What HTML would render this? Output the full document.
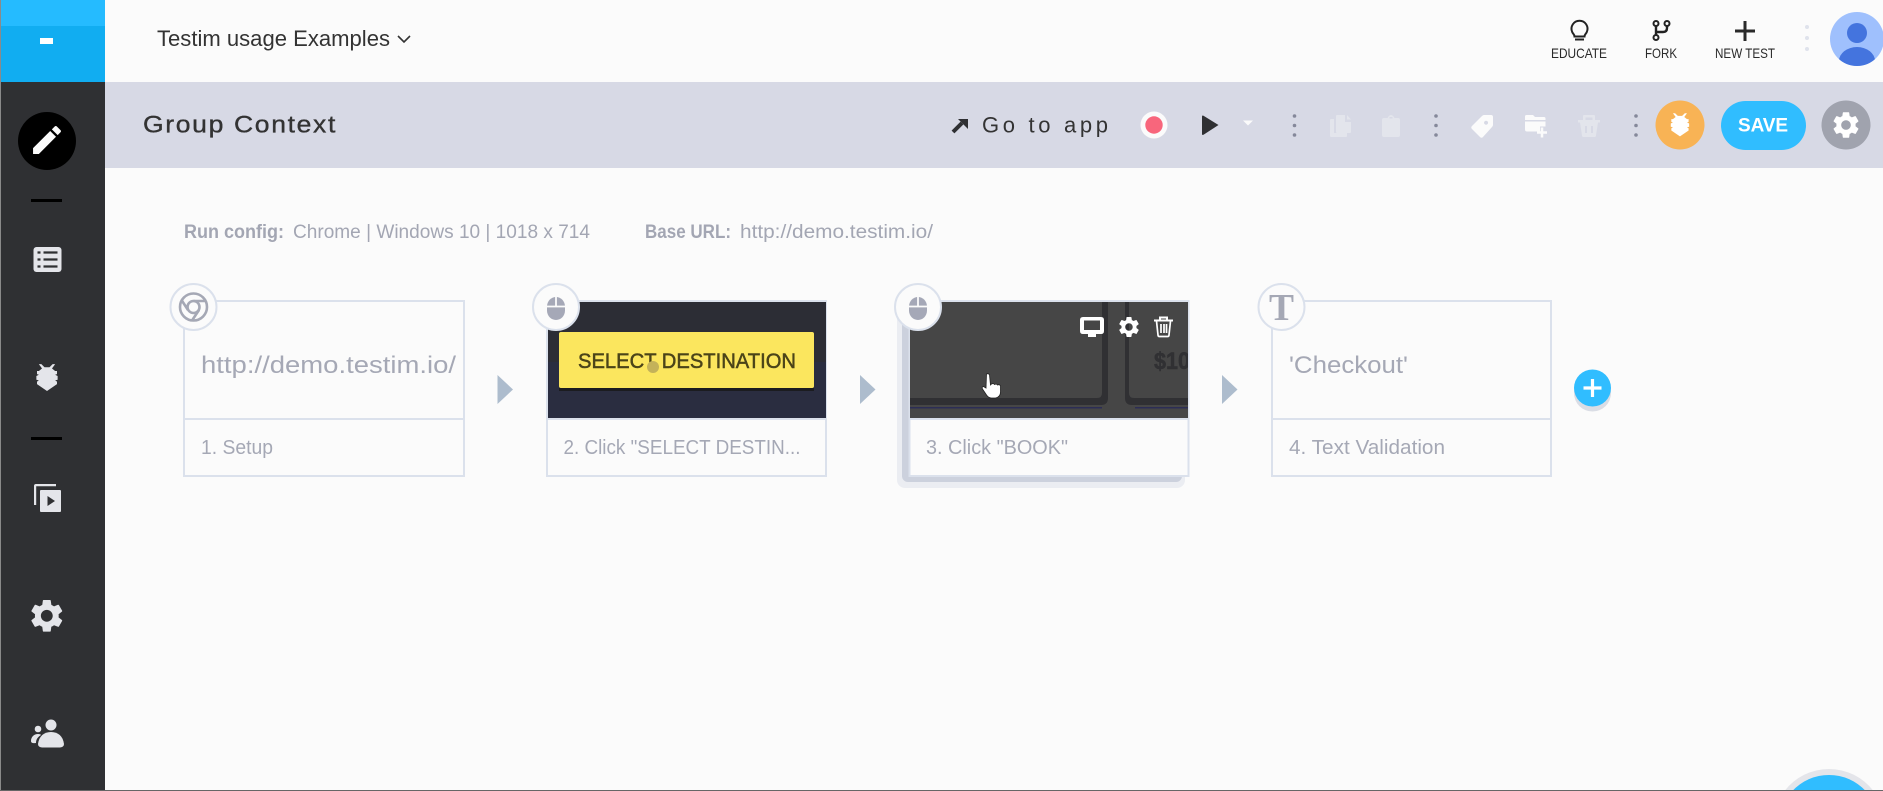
<!DOCTYPE html>
<html><head><meta charset="utf-8"><title>Group Context</title>
<style>
html,body{margin:0;padding:0;width:1883px;height:791px;overflow:hidden;background:#fbfbfb}
svg{display:block;overflow:hidden}
text{font-family:"Liberation Sans",sans-serif}
</style></head>
<body>
<svg width="1883" height="791" viewBox="0 0 1883 791" xmlns="http://www.w3.org/2000/svg">
<defs>
<path id="gear" d="M19.14 12.94c.04-.3.06-.61.06-.94 0-.32-.02-.64-.07-.94l2.03-1.58c.18-.14.23-.41.12-.61l-1.92-3.32c-.12-.22-.37-.29-.59-.22l-2.39.96c-.5-.38-1.03-.7-1.62-.94l-.36-2.54c-.04-.24-.24-.41-.48-.41h-3.84c-.24 0-.43.17-.47.41l-.36 2.54c-.59.24-1.13.57-1.62.94l-2.39-.96c-.22-.08-.47 0-.59.22L2.74 8.87c-.12.21-.08.47.12.61l2.03 1.58c-.05.3-.09.63-.09.94s.02.64.07.94l-2.03 1.58c-.18.14-.23.41-.12.61l1.92 3.32c.12.22.37.29.59.22l2.39-.96c.5.38 1.03.7 1.62.94l.36 2.54c.05.24.24.41.48.41h3.84c.24 0 .44-.17.47-.41l.36-2.54c.59-.24 1.13-.56 1.62-.94l2.39.96c.22.08.47 0 .59-.22l1.92-3.32c.12-.22.07-.47-.12-.61l-2.01-1.58zM12 15.6c-1.98 0-3.6-1.62-3.6-3.6s1.62-3.6 3.6-3.6 3.6 1.62 3.6 3.6-1.62 3.6-3.6 3.6z"/>
<path id="bug" d="M8 6 5.500 2.500H7.500L10 5h4L16.500 2.500h2L16 6 18.500 8H20v2.500L18.500 11 20.500 12v3L18.500 15.500 20 16.500v2L12 24 4 18.500v-2L5.500 15.500 3.500 15v-3L5.500 11 4 10.500V8h1.500z"/>
<g id="mouse">
<rect x="-9" y="-11" width="18" height="23" rx="9" ry="9.500" fill="#a5a8b7"/>
<path d="M-10-1.500H10M0-12V-1.500" stroke="#fbfbfb" stroke-width="1.800" fill="none"/>
</g>
<clipPath id="th2"><rect x="548" y="302" width="278" height="116"/></clipPath>
<clipPath id="th3"><rect x="910" y="302" width="278" height="116"/></clipPath>
<clipPath id="av"><circle cx="1857" cy="39" r="27"/></clipPath>
</defs>

<rect width="1883" height="791" fill="#fbfbfb"/>

<!-- sidebar -->
<rect x="0" y="82" width="105" height="709" fill="#2f3033"/>
<rect x="0" y="0" width="105" height="82" fill="#11adf1"/>
<rect x="0" y="0" width="105" height="26" fill="#25bbff"/>
<rect x="0" y="0" width="1" height="791" fill="#8a8a8a"/>
<rect x="40" y="38" width="13" height="6" fill="#fff"/>
<circle cx="47" cy="141" r="29" fill="#000"/>
<g transform="translate(28.400,121.400) scale(1.550)"><path fill="#fbfbfb" d="M3 17.250V21h3.750L17.810 9.940l-3.750-3.750L3 17.250zM20.710 7.040c.39-.39.39-1.020 0-1.410l-2.340-2.340c-.39-.39-1.020-.39-1.410 0l-1.830 1.830 3.750 3.750 1.830-1.830z"/></g>
<rect x="31" y="199" width="31" height="3" fill="#000"/>
<rect x="33.500" y="247" width="28" height="25" rx="3" fill="#e4e5ea"/>
<path d="M37.500 252.500h3M43.500 252.500h14M37.500 259.500h3M43.500 259.500h14M37.500 266.500h3M43.500 266.500h14" stroke="#2f3033" stroke-width="2.200" fill="none"/>
<g transform="translate(32,361) scale(1.250)"><use href="#bug" fill="#e4e5ea"/></g>
<rect x="31" y="437" width="31" height="3" fill="#000"/>
<path d="M34 505v-19q0-2 2-2h20v2.200H36.200v18.800z" fill="#e4e5ea"/>
<rect x="40" y="490" width="21" height="22" rx="1" fill="#e4e5ea"/>
<path d="M47.500 496l7.500 5-7.500 5z" fill="#2f3033"/>
<g transform="translate(27,596) scale(1.650)"><use href="#gear" fill="#e4e5ea"/></g>
<circle cx="51" cy="725" r="5.500" fill="#e4e5ea"/>
<path d="M38 744c1-8 6-12 13-12s12 4 13 12q0 3-4 3.500H42q-4-.5-4-3.500z" fill="#e4e5ea"/>
<circle cx="38" cy="729" r="3.300" fill="#e4e5ea"/>
<path d="M31 741c0-4 3-7 7-7 2 0 3 .5 3 1-3 2-5 4-5 8-3 .5-5 0-5-2z" fill="#e4e5ea"/>

<!-- top bar -->
<text x="157" y="46" font-size="22" fill="#333" textLength="233" lengthAdjust="spacingAndGlyphs">Testim usage Examples</text>
<path d="M398 36l6 6 6-6" fill="none" stroke="#333" stroke-width="1.600"/>

<!-- bulb -->
<path d="M1574.500 36.500c0-2-1.500-2.500-2.300-4.500a8 8 0 1 1 14.600 0c-.8 2-2.300 2.500-2.300 4.500z" fill="none" stroke="#222" stroke-width="2"/>
<path d="M1575 39.500h9" stroke="#222" stroke-width="2"/>
<text x="1551" y="58" font-size="14" fill="#2a2a2a" textLength="56" lengthAdjust="spacingAndGlyphs">EDUCATE</text>
<!-- fork -->
<circle cx="1656" cy="23.500" r="2.500" fill="none" stroke="#222" stroke-width="2"/>
<circle cx="1667" cy="23.500" r="2.500" fill="none" stroke="#222" stroke-width="2"/>
<circle cx="1656" cy="37.500" r="2.500" fill="none" stroke="#222" stroke-width="2"/>
<path d="M1656 26v9M1667 26v2q0 4-4 4h-7" fill="none" stroke="#222" stroke-width="2.400"/>
<text x="1645" y="58" font-size="14" fill="#2a2a2a" textLength="32" lengthAdjust="spacingAndGlyphs">FORK</text>
<path d="M1735 31h20M1745 21v20" stroke="#2a2a2a" stroke-width="3" fill="none"/>
<text x="1715" y="58" font-size="14" fill="#2a2a2a" textLength="60" lengthAdjust="spacingAndGlyphs">NEW TEST</text>
<circle cx="1807" cy="27" r="2" fill="#dfe3ec"/><circle cx="1807" cy="38" r="2" fill="#dfe3ec"/><circle cx="1807" cy="49" r="2" fill="#dfe3ec"/>
<circle cx="1857" cy="39" r="27" fill="#9fc0fd"/>
<g clip-path="url(#av)">
<circle cx="1857" cy="33" r="10" fill="#4474de"/>
<ellipse cx="1857" cy="61" rx="18" ry="14" fill="#4474de"/>
</g>

<!-- action band -->
<rect x="105" y="82" width="1778" height="86" fill="#d7d9e5"/>
<text x="143" y="132.500" font-size="24" fill="#333" stroke="#333" stroke-width=".35" letter-spacing="1.500" textLength="194" lengthAdjust="spacingAndGlyphs">Group Context</text>

<path d="M953 132l9-9" stroke="#2f3033" stroke-width="4" fill="none"/>
<path d="M958 119h10v10z" fill="#2f3033"/>
<text x="982" y="132.500" font-size="22" fill="#333" textLength="126" lengthAdjust="spacing">Go to app</text>
<circle cx="1154" cy="125" r="13.500" fill="#fbfbfb"/>
<circle cx="1154" cy="125" r="8.700" fill="#f8667c"/>
<path d="M1202 116.500q0-1.500 1.500-.8l15 9.300-15 9.800q-1.500.7-1.500-.8z" fill="#2f3033"/>
<path d="M1243 120.500h10l-5 5z" fill="#fbfbfb"/>
<g fill="#85889a">
<circle cx="1294.500" cy="116" r="1.800"/><circle cx="1294.500" cy="125.500" r="1.800"/><circle cx="1294.500" cy="135" r="1.800"/>
<circle cx="1436" cy="116" r="1.800"/><circle cx="1436" cy="125.500" r="1.800"/><circle cx="1436" cy="135" r="1.800"/>
<circle cx="1636" cy="116" r="1.800"/><circle cx="1636" cy="125.500" r="1.800"/><circle cx="1636" cy="135" r="1.800"/>
</g>
<!-- copy -->
<path d="M1330 135v-15q0-1 1-1h3v14h13v3q0 1-1 1h-15q-1 0-1-2z" fill="#e3e5ec"/>
<path d="M1337 115h8v7h6v10q0 1-1 1h-13q-1 0-1-1v-16q0-1 1-1z" fill="#e3e5ec"/>
<path d="M1347 115l4 4.500h-4z" fill="#e3e5ec"/>
<!-- clipboard -->
<path d="M1384 118h3.500q1.500-3 3.500-3t3.500 3h3.500q2 0 2 2v15q0 2-2 2h-14q-2 0-2-2v-15q0-2 2-2z" fill="#e3e5ec"/>
<rect x="1389.500" y="117" width="3" height="1.500" fill="#d7d9e5"/>
<!-- tag -->
<path d="M1482 116q1-1 2-1h7q2 0 2 2v8q0 1-1 2l-9 10q-1.500 1.500-3 0l-8-8q-1.500-1.500 0-3zM1486 120.700a2 2 0 1 0 .1 0z" fill="#fbfbfb" fill-rule="evenodd"/>
<!-- folder -->
<path d="M1526.500 115h6.500l2 2h9q1.500 0 1.500 1.500V120h-20.500v-3.500q0-1.500 1.500-1.500zM1525 121.500h20.500v5h-5.500v5h-13q-2 0-2-2z" fill="#fbfbfb"/>
<path d="M1537 132.500h10M1542 127.500v10" stroke="#fbfbfb" stroke-width="2.500" fill="none"/>
<!-- trash -->
<path d="M1578 120h22v2.500h-22zM1584 115h10q1 0 1 1v4h-2.500v-2.500h-7V120H1583v-4q0-1 1-1z" fill="#e3e5ec"/>
<path d="M1580 122.500h18l-2 13q0 1.500-1.500 1.500h-11q-1.500 0-1.500-1.500z" fill="#e3e5ec"/>
<path d="M1586 126v7M1592 126v7" stroke="#d7d9e5" stroke-width="2" fill="none"/>

<circle cx="1680" cy="125" r="24.500" fill="#f8b355"/>
<g transform="translate(1667,110.500) scale(1.080)"><use href="#bug" fill="#fff"/></g>
<rect x="1721" y="101" width="85" height="49" rx="24.500" fill="#30bdff"/>
<text x="1738" y="131.500" font-size="19" font-weight="bold" fill="#fff" textLength="50" lengthAdjust="spacing">SAVE</text>
<circle cx="1846" cy="125" r="24.500" fill="#a0a3ae"/>
<g transform="translate(1830,109) scale(1.333)"><use href="#gear" fill="#fff"/></g>

<!-- run config -->
<text x="184" y="238" font-size="19" font-weight="bold" fill="#a3a6b3" textLength="100" lengthAdjust="spacingAndGlyphs">Run config:</text>
<text x="293" y="238" font-size="19" fill="#a3a6b3" textLength="297" lengthAdjust="spacingAndGlyphs">Chrome | Windows 10 | 1018 x 714</text>
<text x="645" y="238" font-size="19" font-weight="bold" fill="#a3a6b3" textLength="86" lengthAdjust="spacingAndGlyphs">Base URL:</text>
<text x="740" y="238" font-size="19" fill="#a3a6b3" textLength="193" lengthAdjust="spacingAndGlyphs">http://demo.testim.io/</text>

<!-- card 1 -->
<rect x="184" y="301" width="280" height="175" fill="#fbfbfb" stroke="#dbe1ec" stroke-width="2"/>
<path d="M184 419h280" stroke="#dbe1ec" stroke-width="2"/>
<text x="201" y="373" font-size="24" fill="#a5a8b5" textLength="255" lengthAdjust="spacingAndGlyphs">http://demo.testim.io/</text>
<text x="201" y="454" font-size="20" fill="#a5a8b5" textLength="72" lengthAdjust="spacingAndGlyphs">1. Setup</text>
<circle cx="193.500" cy="307" r="23" fill="#fbfbfb" stroke="#dbe1ec" stroke-width="2"/>
<g fill="none" stroke="#a5a8b5" stroke-width="2.600">
<circle cx="193.500" cy="307" r="13.500"/>
<circle cx="193.500" cy="307" r="6"/>
<path d="M193.500 301h13M188 310l-6.500-10M199 310l-7 10.500"/>
</g>
<!-- arrow -->
<path d="M497.500 375l15.500 14.500-15.500 14.500z" fill="#adbccd"/>

<!-- card 2 -->
<rect x="547" y="301" width="279" height="175" fill="#fbfbfb" stroke="#dbe1ec" stroke-width="2"/>
<g clip-path="url(#th2)">
<rect x="547" y="302" width="279" height="116" fill="#2a2d40"/>
<rect x="547" y="302" width="279" height="60" fill="#2c2d35"/>
<rect x="559" y="388" width="255" height="3" fill="#1b1c20"/>
<rect x="559" y="332" width="255" height="56" rx="2" fill="#fbe65e"/>
<text x="578" y="368" font-size="21" fill="#4b4419" textLength="218" lengthAdjust="spacingAndGlyphs" stroke="#4b4419" stroke-width=".5">SELECT DESTINATION</text>
<circle cx="653" cy="367" r="6" fill="#c4b259"/>
</g>
<path d="M547 419h279" stroke="#dbe1ec" stroke-width="2"/>
<text x="563.500" y="454" font-size="20" fill="#a5a8b5" textLength="237" lengthAdjust="spacingAndGlyphs">2. Click "SELECT DESTIN...</text>
<circle cx="556" cy="307" r="23" fill="#fbfbfb" stroke="#dbe1ec" stroke-width="2"/>
<use href="#mouse" transform="translate(556,308)"/>
<path d="M860 375l15.500 14.500-15.500 14.500z" fill="#adbccd"/>

<!-- card 3 -->
<rect x="897" y="305" width="288" height="183" rx="8" fill="#ebedf2"/>
<rect x="902" y="305" width="280" height="177" rx="6" fill="#ccd1dd"/>
<rect x="909.500" y="301" width="279" height="175" fill="#fbfbfb" stroke="#dbe1ec" stroke-width="2"/>
<g clip-path="url(#th3)">
<rect x="910" y="302" width="278" height="116" fill="#464646"/>
<path d="M1102 302h6v96q0 7-7 7H910v-7h187q5 0 5-5z" fill="#303033"/>
<path d="M1125 302h4v91q0 5 5 5h54v7h-56q-7 0-7-7z" fill="#303033"/>
<rect x="910" y="407" width="192" height="1.500" fill="#2c2d55"/>
<rect x="1135" y="407" width="53" height="1.500" fill="#2c2d55"/>
<text x="1154" y="369" font-size="24" font-weight="bold" fill="#303033" stroke="#303033" stroke-width=".5" textLength="36" lengthAdjust="spacingAndGlyphs">$10</text>
<path d="M986.500 374q2-1 3 1l1 10 1-1q2-1 3 .5 2-1 3 .5 2-1 3 1v6q0 5-5 6h-4q-3 0-5-3l-4-6q-1-2 1-2.500l2.500 1.500z" fill="#fff" stroke="#222" stroke-width=".8"/>
<path d="M1080 320q0-3 3-3h18q3 0 3 3v11q0 3-3 3h-5v3h-8v-3h-5q-3 0-3-3zM1084 320.500v9.500h16v-9.500z" fill="#fff" fill-rule="evenodd"/>
<g transform="translate(1116.500,314.500) scale(1.040)"><use href="#gear" fill="#fff"/></g>
<path d="M1154 320.500h19M1160 320v-2.500h7v2.500" fill="none" stroke="#fff" stroke-width="2"/>
<path d="M1156.500 321l1.500 14q0 1.500 1.500 1.500h8q1.500 0 1.500-1.500l1.500-14M1161 324v9M1164 324v9M1166.500 324v9" fill="none" stroke="#fff" stroke-width="1.700"/>
</g>
<path d="M909.500 419h279" stroke="#dbe1ec" stroke-width="2"/>
<text x="926" y="454" font-size="20" fill="#a5a8b5" textLength="142" lengthAdjust="spacingAndGlyphs">3. Click "BOOK"</text>
<circle cx="918" cy="307" r="23" fill="#fbfbfb" stroke="#dbe1ec" stroke-width="2"/>
<use href="#mouse" transform="translate(918,308)"/>
<path d="M1222 375l15.500 14.500-15.500 14.500z" fill="#adbccd"/>

<!-- card 4 -->
<rect x="1272" y="301" width="279" height="175" fill="#fbfbfb" stroke="#dbe1ec" stroke-width="2"/>
<path d="M1272 419h279" stroke="#dbe1ec" stroke-width="2"/>
<text x="1289" y="373" font-size="24" fill="#a5a8b5" textLength="119" lengthAdjust="spacingAndGlyphs">'Checkout'</text>
<text x="1289" y="454" font-size="20" fill="#a5a8b5" textLength="156" lengthAdjust="spacingAndGlyphs">4. Text Validation</text>
<circle cx="1281.500" cy="307" r="23" fill="#fbfbfb" stroke="#dbe1ec" stroke-width="2"/>
<text x="1269" y="320" font-size="38" font-weight="bold" style="font-family:'Liberation Serif',serif" fill="#a5a8b5" textLength="25" lengthAdjust="spacingAndGlyphs">T</text>

<!-- add -->
<circle cx="1592.500" cy="393" r="18.500" fill="#dadde5"/>
<circle cx="1592.500" cy="388" r="18.500" fill="#30bdff"/>
<path d="M1583.500 388h18M1592.500 379v18" stroke="#fff" stroke-width="3.200" fill="none"/>

<!-- FAB -->
<path d="M1784.500 791A56 56 0 0 1 1873.500 791Z" fill="#e4e5ea"/>
<path d="M1792.300 791A50 50 0 0 1 1865.700 791Z" fill="#30bdff"/>
<rect x="0" y="790" width="1883" height="1" fill="#666"/>
</svg>
</body></html>
